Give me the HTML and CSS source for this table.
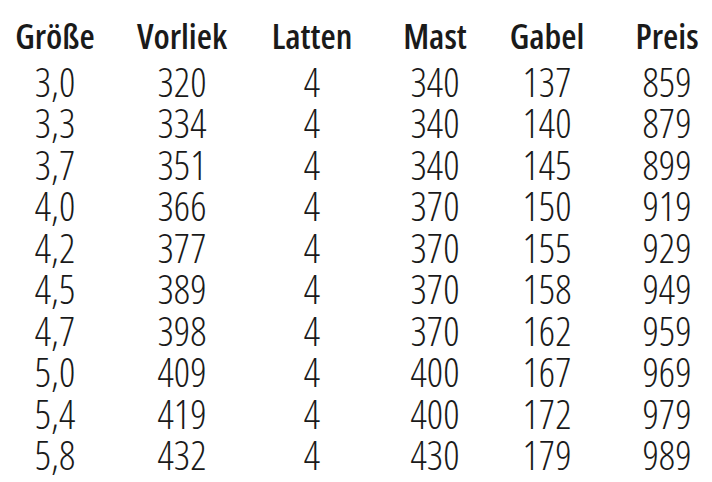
FILE: index.html
```html
<!DOCTYPE html>
<html lang="de">
<head>
<meta charset="utf-8">
<title>Größentabelle</title>
<link rel="stylesheet" href="styles.css">
</head>
<body>
<div class="table">
  <div class="cell head c1">Größe</div>
  <div class="cell head c2">Vorliek</div>
  <div class="cell head c3">Latten</div>
  <div class="cell head c4">Mast</div>
  <div class="cell head c5">Gabel</div>
  <div class="cell head c6">Preis</div>

  <div class="cell c1">3,0</div><div class="cell c2">320</div><div class="cell c3">4</div><div class="cell c4">340</div><div class="cell c5">137</div><div class="cell c6">859</div>
  <div class="cell c1">3,3</div><div class="cell c2">334</div><div class="cell c3">4</div><div class="cell c4">340</div><div class="cell c5">140</div><div class="cell c6">879</div>
  <div class="cell c1">3,7</div><div class="cell c2">351</div><div class="cell c3">4</div><div class="cell c4">340</div><div class="cell c5">145</div><div class="cell c6">899</div>
  <div class="cell c1">4,0</div><div class="cell c2">366</div><div class="cell c3">4</div><div class="cell c4">370</div><div class="cell c5">150</div><div class="cell c6">919</div>
  <div class="cell c1">4,2</div><div class="cell c2">377</div><div class="cell c3">4</div><div class="cell c4">370</div><div class="cell c5">155</div><div class="cell c6">929</div>
  <div class="cell c1">4,5</div><div class="cell c2">389</div><div class="cell c3">4</div><div class="cell c4">370</div><div class="cell c5">158</div><div class="cell c6">949</div>
  <div class="cell c1">4,7</div><div class="cell c2">398</div><div class="cell c3">4</div><div class="cell c4">370</div><div class="cell c5">162</div><div class="cell c6">959</div>
  <div class="cell c1">5,0</div><div class="cell c2">409</div><div class="cell c3">4</div><div class="cell c4">400</div><div class="cell c5">167</div><div class="cell c6">969</div>
  <div class="cell c1">5,4</div><div class="cell c2">419</div><div class="cell c3">4</div><div class="cell c4">400</div><div class="cell c5">172</div><div class="cell c6">979</div>
  <div class="cell c1">5,8</div><div class="cell c2">432</div><div class="cell c3">4</div><div class="cell c4">430</div><div class="cell c5">179</div><div class="cell c6">989</div>
</div>
</body>
</html>
```

FILE: styles.css
```css
html, body {
  margin: 0;
  padding: 0;
  background: #ffffff;
  overflow: hidden;
}

body {
  width: 712px;
  height: 482px;
  color: #1a1a1a;
  font-family: "Open Sans", "Liberation Sans", Arial, sans-serif;
  font-stretch: condensed;
}

.table {
  display: grid;
  grid-template-columns: 110px 144px 116px 130px 94px 1fr;
  grid-template-rows: 47px repeat(10, 41.5px);
  padding-top: 13.5px;
}

.cell {
  text-align: center;
  font-size: 40px;
  font-weight: 340;
  line-height: 41.5px;
  white-space: nowrap;
}

.head {
  font-size: 35px;
  font-weight: 600;
  line-height: 43px;
  align-self: start;
}

.c6 {
  padding-left: 28px;
}
```
